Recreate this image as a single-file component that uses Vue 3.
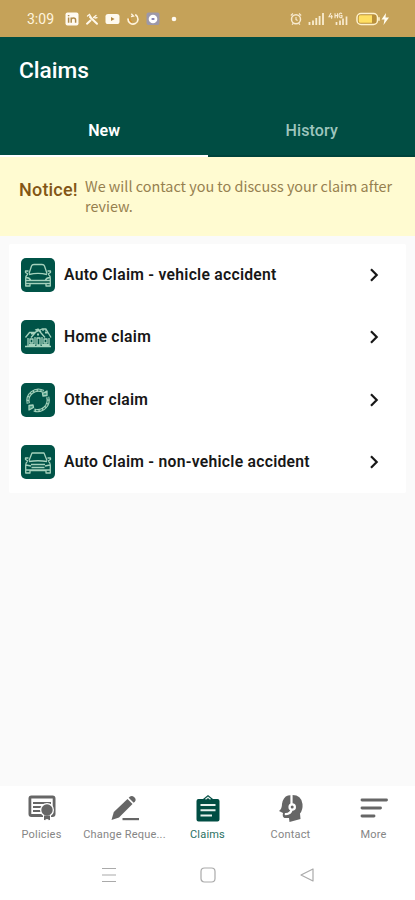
<script setup>
const claims = [
  { label: 'Auto Claim - vehicle accident', icon: 'car' },
  { label: 'Home claim', icon: 'home' },
  { label: 'Other claim', icon: 'cycle' },
  { label: 'Auto Claim - non-vehicle accident', icon: 'car2' },
]
const nav = [
  { label: 'Policies', icon: 'policy' },
  { label: 'Change Reque...', icon: 'edit' },
  { label: 'Claims', icon: 'claims', active: true },
  { label: 'Contact', icon: 'contact' },
  { label: 'More', icon: 'more' },
]
</script>

<template>
  <div class="screen">
    <div class="status">
      <span class="time">3:09</span>
      <div class="apps">
        <svg width="14" height="14" viewBox="0 0 14 14">
          <rect x=".5" y=".5" width="13" height="13" rx="2" fill="#fffaf0" />
          <path d="M3.6 5.6v5.2M3.6 3v1.3M6.2 10.8V5.6M6.2 8c0-2.8 4.4-2.8 4.4 0v2.8" fill="none" stroke="#b08b4a" stroke-width="1.5" />
        </svg>
        <svg width="14" height="14" viewBox="0 0 14 14">
          <path d="m2 11.7 3.5-3.2M12 11.700 5 5" fill="none" stroke="#fff8ea" stroke-width="2" stroke-linecap="round" />
          <path d="m2.500 4 2-1.500L6 5M8.500 5.500l2.500-2M10 6l2-.3" fill="none" stroke="#fff8ea" stroke-width="1.300" stroke-linecap="round" />
        </svg>
        <svg width="15" height="14" viewBox="0 0 15 14">
          <rect x=".5" y="2" width="14" height="10" rx="2.600" fill="#fffaf0" />
          <path d="m6 5 3.600 2L6 9z" fill="#b48b45" />
        </svg>
        <svg width="14" height="14" viewBox="0 0 14 14">
          <path d="M9.800 3A5 5 0 1 1 2 7" fill="none" stroke="#fff3dc" stroke-width="1.700" stroke-linecap="round" />
          <path d="M5.300 1.800 7.500 4 5 4.500" fill="none" stroke="#fff3dc" stroke-width="1.300" />
          <path d="M4 6a3 3 0 0 0 2 4" fill="none" stroke="#d68e2e" stroke-width="1.400" />
        </svg>
        <svg width="14" height="14" viewBox="0 0 14 14">
          <rect x=".5" y=".5" width="13" height="12.500" rx="2" fill="#9d98a9" />
          <circle cx="7" cy="7" r="4.300" fill="#fff" />
          <path d="M5.600 7h2.800" stroke="#8582b4" stroke-width="2" />
        </svg>
        <svg class="dot" width="6" height="6" viewBox="0 0 6 6"><circle cx="3" cy="3" r="2.300" fill="#fffaf0" /></svg>
      </div>
      <div class="system">
        <svg class="alarm" width="12" height="14" viewBox="0 0 12 14">
          <circle cx="6" cy="7.300" r="4.500" fill="none" stroke="#f8ead0" stroke-width="1.500" />
          <path d="M.8 3.500 3 1.500M11.200 3.500 9 1.500M2 12.700l1.200-1.200M10 12.700l-1.200-1.200M6 5v2.600l1.600.8" fill="none" stroke="#f8ead0" stroke-width="1.100" />
        </svg>
        <svg class="signal" width="16" height="14" viewBox="0 0 16 14">
          <path d="M1.500 13v-3M5 13V8.500M8.300 13V6M11.600 13V4M15 13V1" stroke="#f9edcf" stroke-width="1.800" />
        </svg>
        <svg class="network" width="20" height="14" viewBox="0 0 20 14">
          <path d="M3 1 1 4.700h3.800M3.600 3v3.800M7 1.200v5M7 3.600h2.500V1.200v5M14 1.700c-2-1.500-3 0-3 1.800s2 3 3 1.600V3.600h-1.600" fill="none" stroke="#f8ead0" stroke-width="1.100" />
          <path d="M8.500 13v-3M12 13V8.500M15 13V6.500M18.500 13V4.500" stroke="#f8ead0" stroke-width="1.700" />
        </svg>
        <svg class="battery" width="34" height="14" viewBox="0 0 34 14">
          <rect x="1" y="1.500" width="20.500" height="11" rx="4" fill="#b98f3a" stroke="#fff2cd" stroke-width="1.500" />
          <path d="M4 3.200h12v7.600H4q-1.300 0-1.300-2V5.200q0-2 1.300-2z" fill="#ffdf62" />
          <path d="M23 5.200v3.600" stroke="#fff2cd" stroke-width="1.500" />
          <path d="M30 1 25.500 7.500h3L27.500 13l5.500-7.500h-3.500z" fill="#fffdf2" />
        </svg>
      </div>
    </div>

    <header class="header">
      <h1>Claims</h1>
      <nav class="tabs">
        <div class="tab active"><span>New</span></div>
        <div class="tab"><span>History</span></div>
      </nav>
    </header>

    <section class="notice">
      <strong>Notice!</strong>
      <p>We will contact you to discuss your claim after review.</p>
    </section>

    <main class="content">
      <div class="card">
        <div v-for="item in claims" :key="item.label" class="row">
          <div class="tile">
            <svg width="34" height="34" viewBox="0 0 34 34" fill="none" stroke="#a5d2bd" stroke-width="1.300" stroke-linejoin="round">
              <g v-if="item.icon === 'car'">
                <path d="M8 15.500 10.500 8Q11 6.500 13 6.500h8q2 0 2.500 1.500L26 15.500M7.500 13H4.500v1.500L7 16M26.500 13h3v1.500L27 16M7 16q-2.300 1.500-2.300 4.500V28H9v-2.500h16V28h4.300v-7.500q0-3-2.300-4.500M8 16.500q9-2.200 18 0M5 19.500q3.500 0 5 3H5M29 19.500q-3.500 0-5 3h5M10 22.500h14M5 25.500h24" />
              </g>
              <g v-else-if="item.icon === 'car2'">
                <path d="m8 15.500 3-7.500h12l3 7.500M7.500 13H4.500v1.500L7 16M26.500 13h3v1.500L27 16M7 16q-2.300 1.500-2.300 4V28H9v-2.500h16V28h4.300v-8q0-2.500-2.300-4M8 16.500q9-1.500 18 0M5 20l5 1M29 20l-5 1M10 19.500h14M10.500 22.500h13M5 25h24" />
              </g>
              <g v-else-if="item.icon === 'home'">
                <path d="M4 26.500h26M7 26v-8M28 26v-8M14 25v-8M21 25v-8M4.500 17.500l4-5H14l7-3.500h4l5 8.500M10 17.500l7-8 7 8M14 10l3-1 3 3M22 11V9h3v2M9 19h3v4H9zM16 18h3v7h-3zM23 19h3v4h-3z" />
                <path d="M10 13.500h3M24 12.500h3M16 14.500h2M8 25h6M21 25h7" stroke-width="1.800" />
              </g>
              <g v-else>
                <path d="M7.300 20.500A10.500 10.500 0 0 1 22.500 8.500M26.700 14A10.500 10.500 0 0 1 13 26.900" stroke-width="3.200" />
                <path d="M7.300 20.500A10.500 10.500 0 0 1 22.500 8.500M26.700 14A10.500 10.500 0 0 1 13 26.900" stroke="#2a7763" stroke-width="1.200" stroke-dasharray="2.500 1.200" />
                <path d="M21.500 10.500 26 8v4.500l-4 .5zM12.500 24.500 8 27v-4.500l4-.5z" fill="#4a9a83" stroke-width="1.300" />
              </g>
            </svg>
          </div>
          <span class="label">{{ item.label }}</span>
          <svg class="chevron" width="10" height="16" viewBox="0 0 10 16"><path d="m2 2.300 5.700 5.700L2 13.700" fill="none" stroke="#171717" stroke-width="2.200" /></svg>
        </div>
      </div>
    </main>

    <nav class="bottom">
      <div v-for="item in nav" :key="item.label" class="nav-item" :class="{ selected: item.active }">
        <svg width="30" height="30" viewBox="0 0 30 30">
          <g v-if="item.icon === 'policy'">
            <rect x="2.900" y="4" width="24.200" height="18.500" rx="1.500" fill="none" stroke="#666" stroke-width="2.800" />
            <path d="M6 10h18M6 14h10M6 18h8" stroke="#666" stroke-width="2" />
            <circle cx="20" cy="17" r="7" fill="#fff" />
            <path d="M16.500 22h7v6l-3.500-1.500-3.500 1.500z" fill="#666" stroke="#fff" />
            <circle cx="20" cy="17" r="5.700" fill="#666" />
          </g>
          <g v-else-if="item.icon === 'edit'" fill="#666">
            <path d="m1.500 27 2.300-8L17.500 6l5 5L9 24.500z" />
            <path d="m18.700 4.800 1.300-1.300q2-1.500 4.300.7t.7 4.300L23.700 9.800z" />
            <path d="M12.500 25h16.500v2.200H12.500z" />
          </g>
          <g v-else-if="item.icon === 'claims'">
            <path d="M5.500 6H10l5-4 5 4h4.500q2 0 2 2v18.500q0 2-2 2h-19q-2 0-2-2V8q0-2 2-2z" fill="#004d43" />
            <path d="m12.500 6.300 2.500-2 2.500 2" fill="none" stroke="#e6f2ee" stroke-width="1.300" />
            <path d="M7.500 12h15M7.500 17.200h15M7.500 22.400H19" stroke="#e6f2ee" stroke-width="2" />
          </g>
          <g v-else-if="item.icon === 'contact'">
            <path d="M12 2.500Q25 0 26.500 11q.5 6-2.500 9.500l.5 5.500-11 3-.5-4H8.500q-2.500-1-1.500-5L3 18q3-2 3-7 1-7 6-8.500z" fill="#666" />
            <path d="M15.500 2v9M15.800 16q-1 5.500-7 5" fill="none" stroke="#fff" stroke-width="2.200" />
            <circle cx="16.200" cy="14" r="3.800" fill="#fff" />
            <circle cx="16.200" cy="14" r="1.500" fill="#666" />
          </g>
          <path v-else d="M3 7h24.500M3 15h18.500M3 23h12" stroke="#666" stroke-width="2.900" stroke-linecap="round" />
        </svg>
        <span>{{ item.label }}</span>
      </div>
    </nav>

    <div class="system-nav">
      <svg width="16" height="18" viewBox="0 0 16 18"><path d="M1 2.500h14M1 9h14M1 15.500h14" stroke="#aaa" stroke-width="1.200" /></svg>
      <svg width="16" height="18" viewBox="0 0 16 18"><rect x="1" y="2" width="14" height="14" rx="3.500" fill="none" stroke="#aaa" stroke-width="1.200" /></svg>
      <svg width="16" height="18" viewBox="0 0 16 18"><path d="M14 3v12L2 9z" fill="none" stroke="#aaa" stroke-width="1.200" stroke-linejoin="round" /></svg>
    </div>
  </div>
</template>

<style>
body { margin: 0; background: #fff; }
</style>

<style scoped>
.screen { width: 415px; height: 900px; display: flex; flex-direction: column; overflow: hidden; background: #fafafa; font-family: Roboto, sans-serif; }
svg { display: block; flex-shrink: 0; }
.status { height: 37px; flex-shrink: 0; box-sizing: border-box; display: flex; align-items: center; padding: 1px 25px 0 27px; background: #c5a259; }
.time { width: 38px; color: #fff5df; font-size: 14px; }
.apps { display: flex; align-items: center; gap: 6px; }
.dot { margin-left: 5px; }
.system { margin-left: auto; display: flex; align-items: center; }
.signal { margin-left: 6px; }
.network { margin-left: 4px; }
.battery { margin-left: 8px; }
.header { height: 120px; flex-shrink: 0; display: flex; flex-direction: column; background: #004d43; color: #fff; }
h1 { margin: 0; padding: 18px 0 0 19px; font-size: 22.700px; line-height: 31px; font-weight: 550; }
.tabs { margin-top: auto; height: 53px; display: flex; }
.tab { flex: 1; box-sizing: border-box; display: flex; justify-content: center; padding: 17px 0 0 1px; border-bottom: 2px solid #00443c; color: #9dc5bd; font-size: 16px; line-height: 20px; font-weight: 500; letter-spacing: .15px; }
.tab.active { color: #fff; font-weight: 600; border-bottom-color: #fff; }
.notice { height: 79px; flex-shrink: 0; box-sizing: border-box; display: flex; padding: 20px 0 0 19px; background: #fffbd1; }
.notice strong { width: 66px; flex-shrink: 0; color: #835615; font-size: 18px; line-height: 25px; font-weight: 500; letter-spacing: .2px; }
.notice p { width: 320px; margin: -1px 0 0; color: #96804f; font-family: "Noto Sans CJK SC", sans-serif; font-size: 14.400px; line-height: 20px; }
.content { flex: 1; padding: 8px 9px; }
.card { height: 249px; box-sizing: border-box; background: #fff; border-radius: 2px; }
.row { height: 62.300px; display: flex; align-items: center; padding: 0 27px 0 12px; }
.tile { width: 34px; height: 34px; flex-shrink: 0; border-radius: 5px; background: #005347; }
.label { flex: 1; margin-left: 9px; color: #171717; font-size: 15.700px; line-height: 22px; font-weight: 600; letter-spacing: .27px; white-space: nowrap; }
.bottom { height: 64px; flex-shrink: 0; display: flex; background: #fff; }
.nav-item { flex: 1; min-width: 0; display: flex; flex-direction: column; align-items: center; padding-top: 7px; color: #858585; font-size: 11px; line-height: 14px; letter-spacing: .2px; white-space: nowrap; }
.nav-item span { margin-top: 5px; }
.selected { color: #287062; }
.system-nav { height: 50px; flex-shrink: 0; box-sizing: border-box; display: flex; justify-content: center; gap: 83px; padding-top: 16px; background: #fff; }
</style>
